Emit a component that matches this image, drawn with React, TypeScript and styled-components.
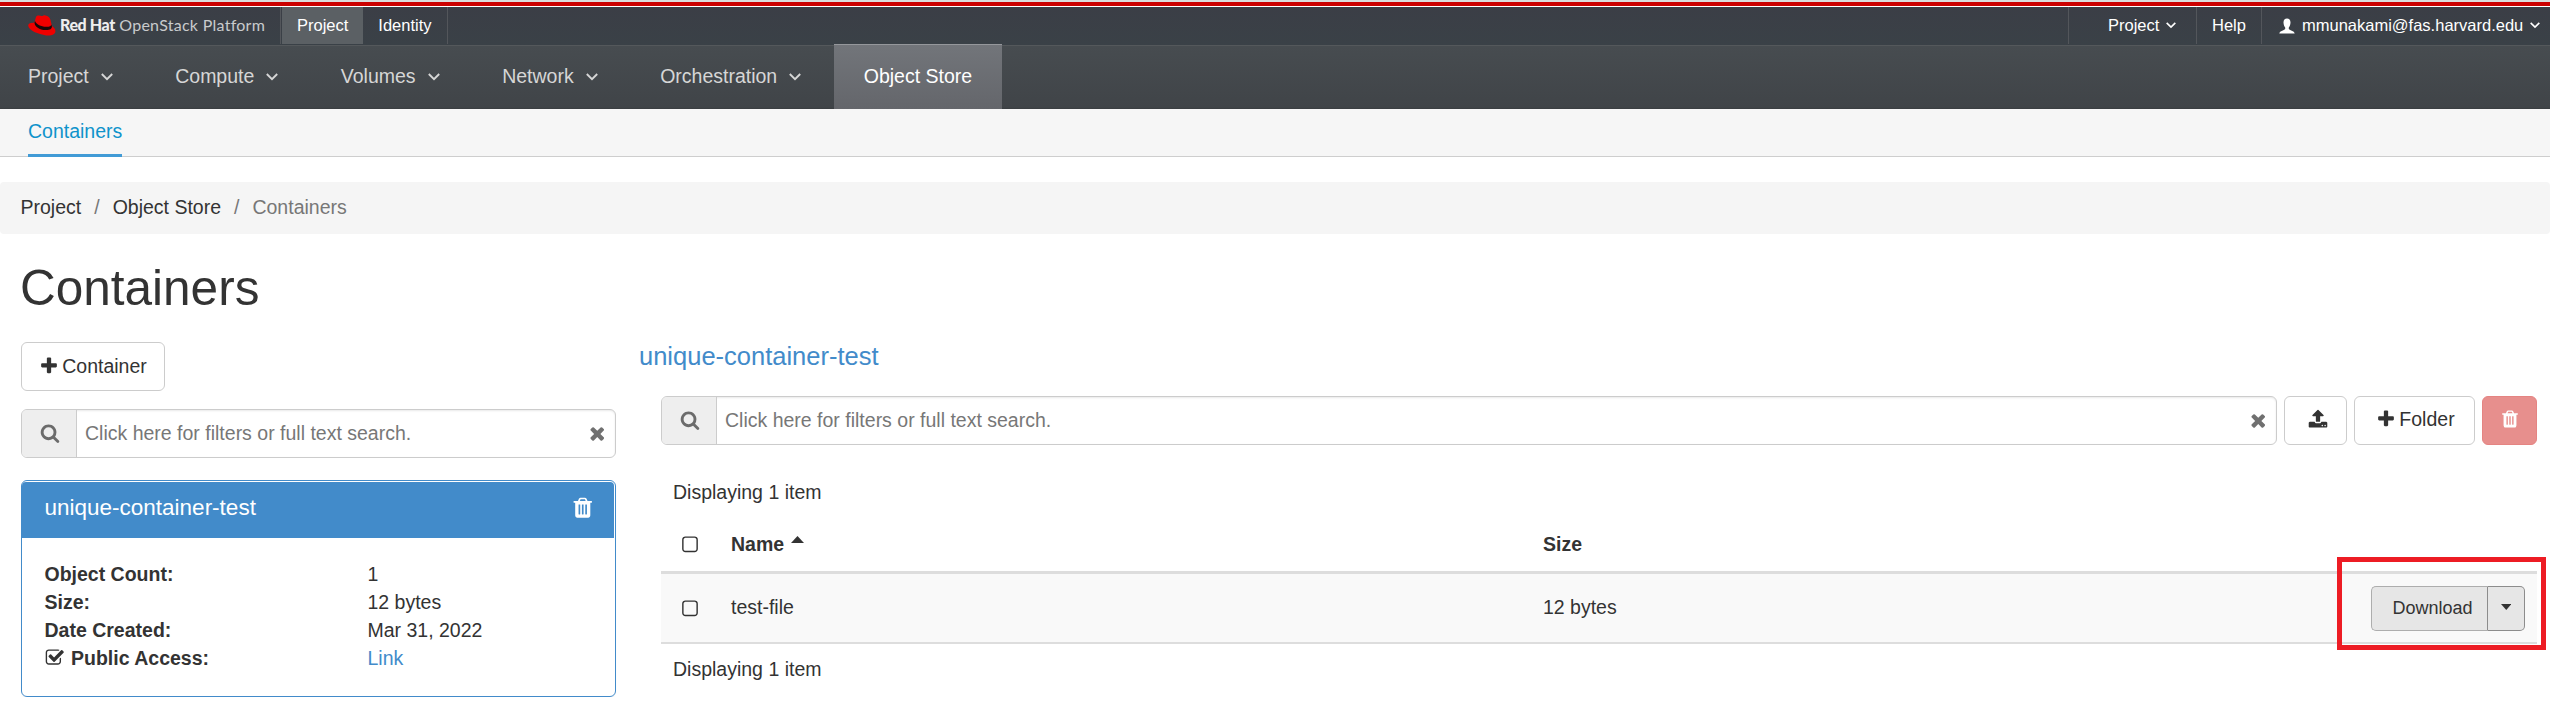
import React from "react";
import styled, { createGlobalStyle } from "styled-components";

const Global = createGlobalStyle`
  *, *::before, *::after { box-sizing: border-box; }
  body {
    margin: 0;
    background: #fff;
    color: #333;
    font-family: "Liberation Sans", Arial, sans-serif;
    font-size: 19.5px;
    line-height: 28px;
  }
  h1, p, dl, dt, dd { margin: 0; }
  a { text-decoration: none; }
  button, input { font: inherit; color: inherit; }
`;

const glyphs = {
  plus: "M1600 736v192q0 40-28 68t-68 28h-416v416q0 40-28 68t-68 28h-192q-40 0-68-28t-28-68v-416h-416q-40 0-68-28t-28-68v-192q0-40 28-68t68-28h416v-416q0-40 28-68t68-28h192q40 0 68 28t28 68v416h416q40 0 68 28t28 68z",
  search:
    "M1216 832q0-185-131.5-316.5t-316.5-131.5-316.5 131.5-131.5 316.5 131.5 316.5 316.5 131.5 316.5-131.5 131.5-316.5zm512 832q0 52-38 90t-90 38q-54 0-90-38l-343-342q-179 124-399 124-143 0-273.5-55.5t-225-150-150-225-55.5-273.5 55.5-273.5 150-225 225-150 273.5-55.5 273.5 55.5 225 150 150 225 55.5 273.5q0 220-124 399l343 343q37 37 37 90z",
  times:
    "M1490 1322q0 40-28 68l-136 136q-28 28-68 28t-68-28l-294-294-294 294q-28 28-68 28t-68-28l-136-136q-28-28-28-68t28-68l294-294-294-294q-28-28-28-68t28-68l136-136q28-28 68-28t68 28l294 294 294-294q28-28 68-28t68 28l136 136q28 28 28 68t-28 68l-294 294 294 294q28 28 28 68z",
  trash:
    "M704 1376v-704q0-14-9-23t-23-9h-64q-14 0-23 9t-9 23v704q0 14 9 23t23 9h64q14 0 23-9t9-23zm256 0v-704q0-14-9-23t-23-9h-64q-14 0-23 9t-9 23v704q0 14 9 23t23 9h64q14 0 23-9t9-23zm256 0v-704q0-14-9-23t-23-9h-64q-14 0-23 9t-9 23v704q0 14 9 23t23 9h64q14 0 23-9t9-23zm-544-992h448l-48-117q-7-9-17-11h-317q-10 2-17 11zm928 32v64q0 14-9 23t-23 9h-96v948q0 83-47 143.5t-113 60.5h-832q-66 0-113-58.5t-47-141.5v-952h-96q-14 0-23-9t-9-23v-64q0-14 9-23t23-9h309l70-167q15-37 54-63t79-26h320q40 0 79 26t54 63l70 167h309q14 0 23 9t9 23z",
  upload:
    "M1344 1472q0-26-19-45t-45-19-45 19-19 45 19 45 45 19 45-19 19-45zm256 0q0-26-19-45t-45-19-45 19-19 45 19 45 45 19 45-19 19-45zm128-224v320q0 40-28 68t-68 28h-1472q-40 0-68-28t-28-68v-320q0-40 28-68t68-28h427q21 56 70.5 92t110.5 36h256q61 0 110.5-36t70.5-92h427q40 0 68 28t28 68zm-325-648q-17 40-59 40h-256v448q0 26-19 45t-45 19h-256q-26 0-45-19t-19-45v-448h-256q-42 0-59-40-17-39 14-69l448-448q18-19 45-19t45 19l448 448q31 30 14 69z",
  unchecked:
    "M1312 256h-832q-66 0-113 47t-47 113v832q0 66 47 113t113 47h832q66 0 113-47t47-113v-832q0-66-47-113t-113-47zm288 160v832q0 119-84.5 203.5t-203.5 84.5h-832q-119 0-203.5-84.5t-84.5-203.5v-832q0-119 84.5-203.5t203.5-84.5h832q119 0 203.5 84.5t84.5 203.5z",
  checked:
    "M1472 930v318q0 119-84.5 203.5t-203.5 84.5h-832q-119 0-203.5-84.5t-84.5-203.5v-832q0-119 84.5-203.5t203.5-84.5h832q63 0 117 25 15 7 18 23 3 17-9 29l-49 49q-10 10-23 10-3 0-9-2-23-6-45-6h-832q-66 0-113 47t-47 113v832q0 66 47 113t113 47h832q66 0 113-47t47-113v-254q0-13 9-22l64-64q10-10 23-10 6 0 12 3 20 8 20 29zm231-489l-814 814q-24 24-57 24t-57-24l-430-430q-24-24-24-57t24-57l110-110q24-24 57-24t57 24l263 263 647-647q24-24 57-24t57 24l110 110q24 24 24 57t-24 57z",
};

const Svg = styled.svg`
  display: block;
  flex: none;
  fill: currentColor;
`;

const Icon = ({ name, size = 20 }: { name: keyof typeof glyphs; size?: number }) => (
  <Svg width={size} height={size} viewBox="0 0 1792 1792">
    <path d={glyphs[name]} />
  </Svg>
);

const ChevronSvg = styled(Svg)`
  fill: none;
  stroke: currentColor;
  stroke-width: 1.9;
`;

const Chevron = ({ width }: { width: number }) => (
  <ChevronSvg width={width} height={(width * 8) / 12} viewBox="0 0 12 8">
    <path d="M0.8 1 L6 6.2 L11.2 1" />
  </ChevronSvg>
);

/* ---------- masthead ---------- */

const AccentBar = styled.div`
  height: 7px;
  border-top: 2px solid #dcdcdc;
  border-bottom: 1px solid #fff;
  background: #c00;
`;

const TopBar = styled.header`
  display: flex;
  height: 38px;
  padding-bottom: 1px;
  background: linear-gradient(#3b3e46, #3a4147);
  color: #fff;
  font-size: 16.5px;
  line-height: 37px;
`;

const Brand = styled.div`
  display: flex;
  align-items: center;
  width: 280px;
  padding-left: 28px;
`;

const BrandName = styled.span`
  margin-left: 4px;
  padding-bottom: 3px;
  font-family: Lato, sans-serif;
  font-size: 16px;
  letter-spacing: 0.27px;
  white-space: nowrap;
  color: #c9cbcd;

  b {
    font-weight: 900;
    letter-spacing: -0.4px;
    color: #eee;
  }
`;

const Switcher = styled.nav`
  display: flex;
  border: solid #53565b;
  border-width: 0 1px;
  padding-left: 1px;
`;

const SwitchItem = styled.a<{ $active?: boolean }>`
  padding: 0 15px;
  background: ${(p) => (p.$active ? "#5b6064" : "transparent")};
`;

const Utilities = styled.div`
  display: flex;
  margin-left: auto;
`;

const Utility = styled.a<{ $width: number; $indent: number }>`
  display: flex;
  align-items: center;
  gap: 7px;
  width: ${(p) => p.$width}px;
  padding-left: ${(p) => p.$indent}px;
  border-left: 1px solid #53565b;
`;

const UserLabel = styled.span`
  display: flex;
  align-items: center;
  gap: 7px;
`;

const MainNav = styled.nav`
  display: flex;
  height: 64px;
  border-top: 1px solid #54585b;
  background: linear-gradient(#474c50, #404448 97%, #393d40);
  color: #d6d6d6;
`;

const NavItem = styled.a<{ $active?: boolean }>`
  display: flex;
  gap: 12px;
  padding: 0 ${(p) => (p.$active ? 30 : 34.5)}px 0 ${(p) => (p.$active ? 30 : 28)}px;
  line-height: 60px;
  white-space: nowrap;

  svg { margin-top: 27px; }

  ${(p) =>
    p.$active &&
    `
    margin: -2px 0 0 -2px;
    padding-top: 1px;
    border-top: 1px solid #95979b;
    background: linear-gradient(#72757a, #64666b);
    color: #fff;
  `}
`;

const SubNav = styled.nav`
  display: flex;
  height: 48px;
  padding-left: 28px;
  border-bottom: 1px solid #cecece;
  background: #f6f6f6;
`;

const SubNavItem = styled.a`
  height: 48px;
  border-bottom: 3px solid #419bd6;
  color: #0f93cb;
  line-height: 44px;
`;

const Breadcrumb = styled.nav`
  display: flex;
  height: 52px;
  margin-top: 25px;
  padding-left: 20.5px;
  border-radius: 4px;
  background: #f5f5f5;
  line-height: 51px;
`;

const Crumb = styled.span<{ $current?: boolean }>`
  color: ${(p) => (p.$current ? "#777" : "#333")};

  &:not(:first-child)::before {
    content: "/";
    padding: 0 13px;
    color: #777;
  }
`;

/* ---------- content ---------- */

const Title = styled.h1`
  margin: 26px 0 0 20px;
  font-size: 49.5px;
  font-weight: 400;
  line-height: 56px;
`;

const Columns = styled.main`
  display: flex;
  padding: 26px 13px 0 21px;
`;

const Sidebar = styled.aside`
  width: 595px;
`;

const Detail = styled.section`
  flex: 1;
  margin-left: 23px;
`;

const Button = styled.button<{ $danger?: boolean; $width: number; $indent?: number }>`
  display: flex;
  align-items: center;
  justify-content: center;
  gap: 3px;
  width: ${(p) => p.$width}px;
  height: 49px;
  padding: 0 0 2px ${(p) => p.$indent ?? 0}px;
  border: 1px solid ${(p) => (p.$danger ? "#e58482" : "#ccc")};
  border-radius: 6px;
  background: ${(p) => (p.$danger ? "#e78f8d" : "#fff")};
  color: ${(p) => (p.$danger ? "#fff" : "#333")};
`;

const SearchBox = styled.div`
  display: flex;
  align-items: center;
  flex: 1;
  height: 49px;
  border: 1px solid #ccc;
  border-radius: 6px;
  box-shadow: inset 0 1px 2px rgba(0, 0, 0, 0.09);
  color: #777;
`;

const SearchAddon = styled.span`
  display: flex;
  align-items: center;
  justify-content: center;
  width: 55px;
  height: 47px;
  padding: 0 0 1px 1px;
  border-right: 1px solid #ccc;
  border-radius: 5px 0 0 5px;
  background: #eee;
  color: #6b6b6b;
`;

const Placeholder = styled.span`
  flex: 1;
  padding: 0 0 2px 8px;
`;

const ClearMark = styled.span`
  margin-right: 8px;
  color: #707070;
`;

const Search = () => (
  <SearchBox>
    <SearchAddon><Icon name="search" /></SearchAddon>
    <Placeholder>Click here for filters or full text search.</Placeholder>
    <ClearMark><Icon name="times" size={20.5} /></ClearMark>
  </SearchBox>
);

const SidebarSearch = styled.div`
  display: flex;
  margin-top: 18px;
`;

const Card = styled.article`
  height: 217px;
  margin-top: 22px;
  border: 1px solid #428bca;
  border-radius: 6px;
  box-shadow: 0 1px 1px rgba(0, 0, 0, 0.05);
`;

const CardHeader = styled.div`
  display: flex;
  align-items: center;
  justify-content: space-between;
  height: 56px;
  margin: 1px 1px 0 0;
  padding: 0 20px 4px 22.5px;
  border-radius: 4px 4px 0 0;
  background: #428bca;
  color: #fff;
  font-size: 22.5px;
`;

const Facts = styled.dl`
  display: grid;
  grid-template-columns: 323px 1fr;
  padding: 22px 22.5px;
`;

const Term = styled.dt`
  display: flex;
  align-items: center;
  gap: 7px;
  font-weight: 700;
`;

const BlueLink = styled.a`
  color: #428bca;
`;

const DetailTitle = styled.div`
  color: #428bca;
  font-size: 25.5px;
`;

const Toolbar = styled.div`
  display: flex;
  gap: 7px;
  margin: 26px 0 0 22px;

  button { padding-bottom: 4px; }
`;

const Listing = styled.div`
  margin: 33px 0 0 22px;
`;

const Count = styled.p`
  padding-left: 12px;

  * + & { margin-top: 11px; }
`;

const Row = styled.div<{ $head?: boolean }>`
  display: grid;
  grid-template-columns: 70px 812px 1fr auto;
  align-items: center;
  height: ${(p) => (p.$head ? 68 : 70)}px;
  padding: ${(p) => (p.$head ? "11px 12px 0 0" : "0 12px 0 0")};
  border-bottom: ${(p) => (p.$head ? 3 : 2)}px solid #ddd;
  background: ${(p) => (p.$head ? "#fff" : "#f9f9f9")};
  font-weight: ${(p) => (p.$head ? 700 : 400)};
`;

const Checkbox = styled.span`
  padding: 1.5px 0 0 19px;
`;

const Cell = styled.span`
  padding-bottom: 2px;
`;

const NameHead = styled.span`
  display: flex;
  gap: 7px;

  svg { margin-top: 6px; }
`;

const Caret = ({ up }: { up?: boolean }) => (
  <Svg width={up ? 13 : 10.5} height={up ? 7 : 6} viewBox="0 0 12 6" preserveAspectRatio="none">
    <path d={up ? "M0 6 L6 0 L12 6 Z" : "M0 0 L12 0 L6 6 Z"} />
  </Svg>
);

const ActionGroup = styled.div`
  position: relative;
  display: flex;
  height: 45px;
  font-size: 18px;
`;

const DownloadButton = styled.button`
  width: 117px;
  padding: 0 0 0 6px;
  border: 1px solid #adadad;
  border-right-color: #8c8c8c;
  border-radius: 5px 0 0 5px;
  background: #e6e6e6;
`;

const MenuButton = styled.button`
  display: flex;
  align-items: center;
  justify-content: center;
  width: 37px;
  padding: 0 0 2px;
  border: 1px solid #8c8c8c;
  border-left: 0;
  border-radius: 0 5px 5px 0;
  background: #e6e6e6;
`;

/* Annotation frame drawn over the action buttons. */
const Highlight = styled.div`
  position: absolute;
  inset: -29px -21px -19px -34px;
  border: 5px solid #ed1c24;
  pointer-events: none;
`;

const HatLogo = () => (
  <Svg width="28" height="21" viewBox="0 0 28 21">
    <path
      fill="#e00"
      d="M6.4 7.7 7.8 2.400C8.300.9 9.600.3 11.200.5c1.200.1 1.700.6 2.700.6 1.100 0 1.600-1 3.400-.7 3 .5 4.500 2 5.200 4.600l1.400 5.900c2.300 1.400 3.700 3.400 3.500 5.500-.4 3.300-4.300 4.500-9.300 4C10.500 19.600.5 15.400.2 10.600.1 8.800 2.200 7.400 6.400 7.700z"
    />
    <path
      fill="#1b0808"
      d="M6.500 7.700 7 5.900C8.200 9.300 13.100 11.600 18 11.700c3.300.1 5.200-.7 5.400-2.300l.5 1.900c.2 2.800-2.300 4-6.400 3.800C11.500 14.800 6.600 11.500 6.500 7.700z"
    />
  </Svg>
);

const PersonIcon = () => (
  <Svg width="16" height="16" viewBox="0 0 16 16">
    <path d="M8 0.500C10.300.5 11.600 2.200 11.500 4.700 11.400 7 10.500 8.600 9.800 9.400v1.500c.2 1 5.700 1.800 5.900 4.600H.3C.5 12.700 6 11.900 6.200 10.900V9.400C5.500 8.600 4.600 7 4.500 4.700 4.400 2.200 5.700.5 8 .5z" />
  </Svg>
);

const menus = ["Project", "Compute", "Volumes", "Network", "Orchestration"];

export default function App() {
  return (
    <>
      <Global />
      <AccentBar />
      <TopBar>
        <Brand>
          <HatLogo />
          <BrandName><b>Red Hat</b> OpenStack Platform</BrandName>
        </Brand>
        <Switcher>
          <SwitchItem $active>Project</SwitchItem>
          <SwitchItem>Identity</SwitchItem>
        </Switcher>
        <Utilities>
          <Utility $width={128} $indent={39}>Project<Chevron width={10} /></Utility>
          <Utility $width={65} $indent={15}>Help</Utility>
          <Utility $width={289} $indent={17}>
            <UserLabel><PersonIcon />mmunakami@fas.harvard.edu</UserLabel>
            <Chevron width={10} />
          </Utility>
        </Utilities>
      </TopBar>
      <MainNav>
        {menus.map((label) => (
          <NavItem key={label}>{label}<Chevron width={12} /></NavItem>
        ))}
        <NavItem $active>Object Store</NavItem>
      </MainNav>
      <SubNav><SubNavItem>Containers</SubNavItem></SubNav>
      <Breadcrumb>
        <Crumb>Project</Crumb>
        <Crumb>Object Store</Crumb>
        <Crumb $current>Containers</Crumb>
      </Breadcrumb>
      <Title>Containers</Title>
      <Columns>
        <Sidebar>
          <Button $width={144}><Icon name="plus" />Container</Button>
          <SidebarSearch><Search /></SidebarSearch>
          <Card>
            <CardHeader>unique-container-test<Icon name="trash" size={23.5} /></CardHeader>
            <Facts>
              <Term>Object Count:</Term><dd>1</dd>
              <Term>Size:</Term><dd>12 bytes</dd>
              <Term>Date Created:</Term><dd>Mar 31, 2022</dd>
              <Term><Icon name="checked" size={19.5} />Public Access:</Term><dd><BlueLink>Link</BlueLink></dd>
            </Facts>
          </Card>
        </Sidebar>
        <Detail>
          <DetailTitle>unique-container-test</DetailTitle>
          <Toolbar>
            <Search />
            <Button $width={63} $indent={5}><Icon name="upload" /></Button>
            <Button $width={121} $indent={2}><Icon name="plus" />Folder</Button>
            <Button $width={55} $danger><Icon name="trash" /></Button>
          </Toolbar>
          <Listing>
            <Count>Displaying 1 item</Count>
            <Row $head>
              <Checkbox><Icon name="unchecked" /></Checkbox>
              <NameHead>Name<Caret up /></NameHead>
              <span>Size</span>
            </Row>
            <Row>
              <Checkbox><Icon name="unchecked" /></Checkbox>
              <Cell>test-file</Cell>
              <Cell>12 bytes</Cell>
              <ActionGroup>
                <DownloadButton>Download</DownloadButton>
                <MenuButton><Caret /></MenuButton>
                <Highlight />
              </ActionGroup>
            </Row>
            <Count>Displaying 1 item</Count>
          </Listing>
        </Detail>
      </Columns>
    </>
  );
}
